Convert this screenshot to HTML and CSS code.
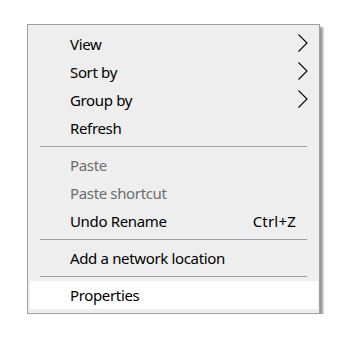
FILE: index.html
```html
<!DOCTYPE html>
<html lang="en">
  <head>
    <meta charset="utf-8">
    <title>Context menu</title>
    <link rel="stylesheet" href="styles.css">
  </head>
  <body>
    <div class="menu">
      <div class="item">
        <span class="label">View</span>
        <svg class="chevron" width="10" height="18" viewBox="0 0 10 18"><polyline points="0.5,0.5 9,9 0.5,17.5" /></svg>
      </div>
      <div class="item">
        <span class="label">Sort by</span>
        <svg class="chevron" width="10" height="18" viewBox="0 0 10 18"><polyline points="0.5,0.5 9,9 0.5,17.5" /></svg>
      </div>
      <div class="item">
        <span class="label">Group by</span>
        <svg class="chevron" width="10" height="18" viewBox="0 0 10 18"><polyline points="0.5,0.5 9,9 0.5,17.5" /></svg>
      </div>
      <div class="item">
        <span class="label">Refresh</span>
      </div>
      <div class="separator"></div>
      <div class="item disabled">
        <span class="label">Paste</span>
      </div>
      <div class="item disabled">
        <span class="label">Paste shortcut</span>
      </div>
      <div class="item">
        <span class="label">Undo Rename</span>
        <span class="shortcut">Ctrl+Z</span>
      </div>
      <div class="separator"></div>
      <div class="item">
        <span class="label">Add a network location</span>
      </div>
      <div class="separator"></div>
      <div class="item hover">
        <span class="label">Properties</span>
      </div>
    </div>
  </body>
</html>
```

FILE: styles.css
```css
body {
  margin: 0;
  background: #ffffff;
  font-family: "Noto Sans", "Open Sans", sans-serif;
}
.menu {
  box-sizing: border-box;
  width: 293px;
  margin: 24px 0 0 27px;
  padding: 5px 1px 4px 2px;
  background: #eeeeee;
  border: 1px solid #a0a0a0;
  box-shadow: 3px 3px 2px rgba(0, 0, 0, 0.4);
}
.item {
  display: flex;
  align-items: center;
  height: 28px;
  padding: 0 10px 0 40px;
  font-size: 15px;
  letter-spacing: -0.35px;
  color: #000000;
}
.item.hover {
  background: #ffffff;
}
.item.disabled {
  color: #6d6d6d;
}
.label {
  flex: 1;
  white-space: nowrap;
}
.shortcut {
  margin-right: 12px;
  letter-spacing: 0.2px;
}
.chevron {
  margin-top: -2px;
}
.chevron polyline {
  fill: none;
  stroke: #000000;
  stroke-width: 1.1;
}
.separator {
  height: 1px;
  margin: 4px 11px 4px 10px;
  background: #a0a0a0;
}
```
